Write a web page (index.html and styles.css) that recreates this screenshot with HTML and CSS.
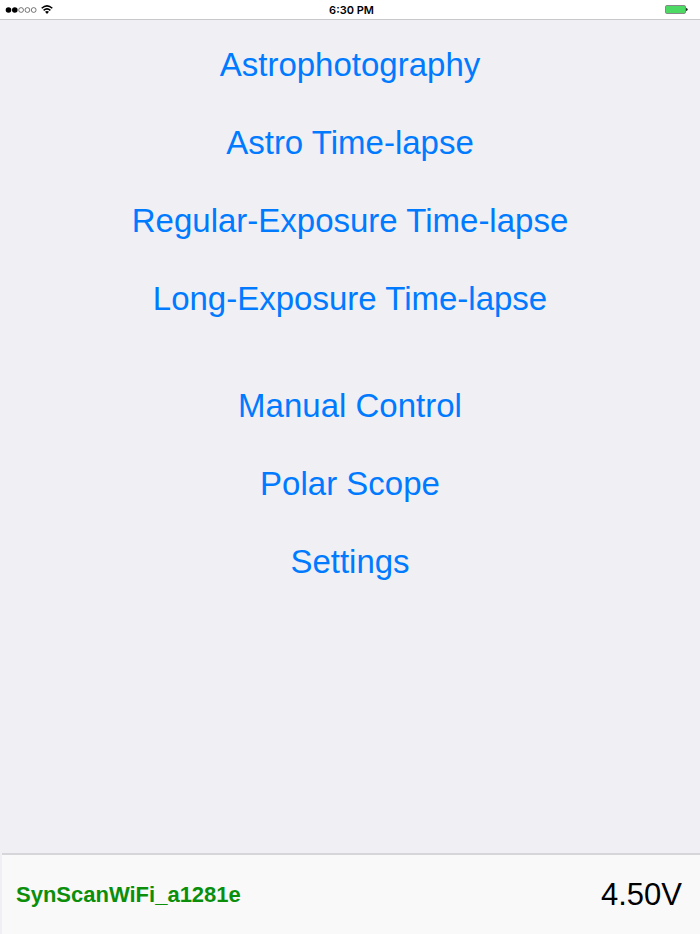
FILE: index.html
```html
<!DOCTYPE html>
<html lang="en">
<head>
<meta charset="utf-8">
<meta name="viewport" content="width=device-width, initial-scale=1">
<title>SynScan</title>
<link rel="stylesheet" href="styles.css">
</head>
<body>
<header class="status">
  <div class="signal">
    <svg width="32" height="8" viewBox="0 0 32 8" role="img" aria-label="Signal strength">
      <circle class="full" cx="3.5" cy="4" r="2.8"/><circle class="full" cx="9.8" cy="4" r="2.8"/>
      <circle class="empty" cx="16.1" cy="4" r="2.4"/><circle class="empty" cx="22.4" cy="4" r="2.4"/><circle class="empty" cx="28.7" cy="4" r="2.4"/>
    </svg>
    <svg width="12" height="9" viewBox="0 0 12 9" role="img" aria-label="Wi-Fi">
      <path class="wave" d="M.7 3.3Q6-1.5 11.3 3.3M2.6 5.4Q6 2.3 9.4 5.4"/><path d="M4 6.8Q6 5.2 8 6.8L6 8.9Z"/>
    </svg>
  </div>
  <time class="clock">6:30 PM</time>
  <svg class="battery" width="24" height="9" viewBox="0 0 24 9" role="img" aria-label="Battery full">
    <rect class="charge" x="1.5" y=".5" width="20" height="8" rx="1.3"/><rect class="case" x="1.5" y=".5" width="20" height="8" rx="1.3"/><path class="tip" d="M22 3Q23.7 3.1 23.7 4.5T22 6Z"/>
  </svg>
</header>
<main class="menu">
  <nav class="group">
    <button type="button">Astrophotography</button>
    <button type="button">Astro Time-lapse</button>
    <button type="button">Regular-Exposure Time-lapse</button>
    <button type="button">Long-Exposure Time-lapse</button>
  </nav>
  <nav class="group">
    <button type="button">Manual Control</button>
    <button type="button">Polar Scope</button>
    <button type="button">Settings</button>
  </nav>
</main>
<footer class="toolbar">
  <span class="network">SynScanWiFi_a1281e</span>
  <span class="voltage">4.50V</span>
</footer>
</body>
</html>
```
FILE: styles.css
```css
* { box-sizing: border-box; }
body {
  margin: 0;
  min-height: 100vh;
  display: flex;
  flex-direction: column;
  background: #efeff4;
  color: #000;
  font-family: "Liberation Sans", Arial, sans-serif;
}
.status {
  display: grid;
  grid-template-columns: 1fr auto 1fr;
  align-items: center;
  height: 20px;
  padding: 0 12px 0 5px;
  background: #fff;
  border-bottom: 1px solid #c8c8cc;
}
.signal { display: flex; align-items: center; gap: 4px; }
.full { fill: #000; }
.empty { fill: none; stroke: #222; stroke-width: .6; }
.wave { fill: none; stroke: #000; stroke-width: 1.5; }
.clock { margin-left: 10px; font: 600 11px/16px Inter, "Liberation Sans", sans-serif; }
.battery { justify-self: end; }
.case { fill: none; stroke: #888; stroke-width: 1; }
.charge { fill: #4cd964; }
.tip { fill: #222; }
.menu {
  flex: 1;
  display: flex;
  flex-direction: column;
  gap: 67px;
  padding-top: 25px;
}
.group {
  display: flex;
  flex-direction: column;
  align-items: center;
  gap: 38px;
}
.group button {
  padding: 0;
  border: 0;
  background: none;
  color: #007aff;
  font: 33px/40px "Liberation Sans", Arial, sans-serif;
}
.toolbar {
  display: flex;
  align-items: center;
  justify-content: space-between;
  height: 81px;
  margin-left: 2px;
  padding: 0 18px 0 14px;
  background: #f9f9f9;
  border-top: 2px solid #d6d6da;
}
.network { color: #0b8f0b; font-size: 22px; font-weight: 700; }
.voltage { font-size: 31px; }
```
